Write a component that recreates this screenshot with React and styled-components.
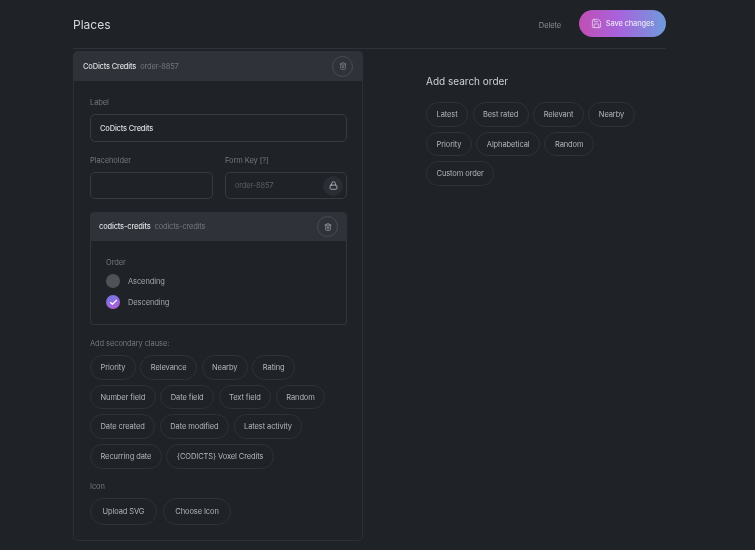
import React from 'react';
import styled, { createGlobalStyle } from 'styled-components';
import { Lock, Save, Trash2, Check } from 'lucide-react';

const GlobalStyle = createGlobalStyle`
  html, body {
    margin: 0;
    padding: 0;
    background: #1f2227;
    font-family: Inter, "Liberation Sans", sans-serif;
    overflow: hidden;
  }
`;

const Page = styled.div`
  width: 593px;
  height: 550px;
  margin-left: 73px;
  filter: blur(0.45px);
`;

const TopBar = styled.header`
  display: flex;
  align-items: center;
  height: 48px;
  border-bottom: 1px solid #2f3238;
  margin-bottom: 2px;
`;

const Title = styled.h1`
  flex: 1;
  margin: 0;
  font-size: 12px;
  font-weight: 400;
  color: #d8d9dc;
`;

const DeleteLink = styled.span`
  font-size: 7.5px;
  letter-spacing: -0.1px;
  color: #8b8d92;
  margin: 2px 18px 0 0;
`;

const SaveButton = styled.button`
  display: flex;
  align-items: center;
  justify-content: center;
  gap: 4px;
  width: 87px;
  height: 27px;
  margin-top: -1px;
  padding: 0;
  border: 0;
  border-radius: 14px;
  background: linear-gradient(90deg, #c04fb3 0%, #a862dc 45%, #6f9bdc 100%);
  color: #e9e2f4;
  font: 500 7.5px Inter, "Liberation Sans", sans-serif;
  letter-spacing: -0.15px;
`;

const Columns = styled.div`
  display: grid;
  grid-template-columns: 290px 240px;
  column-gap: 63px;
  align-items: start;
`;

const Card = styled.section`
  border: 1px solid #2d3036;
  border-top: 0;
  border-radius: 5px;
`;

const CardHead = styled.div`
  display: flex;
  align-items: center;
  gap: 4px;
  height: ${(p) => p.$height}px;
  padding: 0 ${(p) => p.$right}px 0 ${(p) => p.$left}px;
  margin: 0 -1px;
  background: #2f3239;
  border-radius: 5px 5px 0 0;
`;

const HeadName = styled.span`
  font-size: 7.5px;
  letter-spacing: -0.18px;
  font-weight: 500;
  color: #dedfe2;
`;

const HeadKey = styled.span`
  flex: 1;
  font-size: 7.5px;
  letter-spacing: -0.18px;
  color: #74777d;
`;

const RoundIcon = styled.span`
  display: flex;
  align-items: center;
  justify-content: center;
  width: 19px;
  height: 19px;
  border: 1px solid #4a4d54;
  border-radius: 50%;
  color: ${(p) => (p.$dim ? '#75777c' : '#a9abaf')};
`;

const CardBody = styled.div`
  padding: 16px 15px 15px 16px;
`;

const FieldLabel = styled.div`
  font-size: 7.5px;
  letter-spacing: -0.1px;
  line-height: 11px;
  color: #74777d;
  margin-bottom: ${(p) => p.$gap || 6}px;
`;

const Field = styled.div`
  display: flex;
  align-items: center;
  height: ${(p) => p.$height}px;
  box-sizing: border-box;
  padding: 0 3px 0 9px;
  border: 1px solid #373a41;
  border-radius: 5px;
  font-size: 7.5px;
  letter-spacing: -0.18px;
`;

const FieldValue = styled.span`
  flex: 1;
  font-weight: ${(p) => (p.$muted ? 400 : 500)};
  color: ${(p) => (p.$muted ? '#5c5f65' : '#dedfe2')};
`;

const LockBadge = styled.span`
  display: flex;
  align-items: center;
  justify-content: center;
  width: 20px;
  height: 20px;
  border-radius: 50%;
  background: #2a2d33;
  color: #c4c5c9;
`;

const FieldRow = styled.div`
  display: grid;
  grid-template-columns: 123px 122px;
  column-gap: 12px;
  margin-top: 13px;
`;

const InnerCard = styled.div`
  margin: 13px 0 13px;
  border: 1px solid #32353b;
  border-top: 0;
  border-radius: 4px;
`;

const InnerBody = styled.div`
  padding: 16px 15px 15px;
`;

const OptionRow = styled.div`
  display: flex;
  align-items: center;
  gap: 8px;
  height: 14px;
  margin-top: ${(p) => p.$top}px;
  font-size: 7.5px;
  letter-spacing: -0.1px;
  color: #a5a7ab;
`;

const Radio = styled.span`
  display: flex;
  align-items: center;
  justify-content: center;
  width: 14px;
  height: 14px;
  border-radius: 50%;
  background: ${(p) => (p.$checked ? 'linear-gradient(160deg, #6f78e8, #b65dd6)' : '#505258')};
  color: #fff;
`;

const ChipStack = styled.div`
  display: flex;
  flex-direction: column;
  gap: 5px;
`;

const ChipRow = styled.div`
  display: flex;
  gap: ${(p) => p.$gap || 4.5}px;
`;

const Chip = styled.span`
  display: flex;
  align-items: center;
  height: ${(p) => (p.$tall ? 27 : 24.7)}px;
  box-sizing: border-box;
  padding: 0 ${(p) => (p.$tall ? 11.5 : 9.5)}px;
  border: 1px solid #2f3238;
  border-radius: 14px;
  font-size: 7.5px;
  letter-spacing: -0.1px;
  color: #b5b6ba;
  white-space: nowrap;
`;

const IconLabel = styled(FieldLabel)`
  margin-top: 12px;
`;

const SideTitle = styled.h2`
  margin: 23px 0 14px;
  font-size: 10px;
  line-height: 14px;
  font-weight: 400;
  color: #d0d1d4;
`;

const orders = [['Latest', 'Best rated', 'Relevant', 'Nearby'], ['Priority', 'Alphabetical', 'Random'], ['Custom order']];
const clauses = [
  ['Priority', 'Relevance', 'Nearby', 'Rating'],
  ['Number field', 'Date field', 'Text field', 'Random'],
  ['Date created', 'Date modified', 'Latest activity'],
  ['Recurring date', '{CODICTS} Voxel Credits'],
];

function ChipRows({ rows }) {
  return (
    <ChipStack>
      {rows.map((row, index) => (
        <ChipRow key={index}>
          {row.map((name) => <Chip key={name}>{name}</Chip>)}
        </ChipRow>
      ))}
    </ChipStack>
  );
}

export default function App() {
  return (
    <Page>
      <GlobalStyle />
      <TopBar>
        <Title>Places</Title>
        <DeleteLink>Delete</DeleteLink>
        <SaveButton><Save size={11} strokeWidth={1.6} />Save changes</SaveButton>
      </TopBar>
      <Columns>
        <Card>
          <CardHead $height={30} $left={10} $right={10}>
            <HeadName>CoDicts Credits</HeadName>
            <HeadKey>order-8857</HeadKey>
            <RoundIcon $dim><Trash2 size={8} strokeWidth={2.6} /></RoundIcon>
          </CardHead>
          <CardBody>
            <FieldLabel>Label</FieldLabel>
            <Field $height={28}><FieldValue>CoDicts Credits</FieldValue></Field>
            <FieldRow>
              <div>
                <FieldLabel>Placeholder</FieldLabel>
                <Field $height={27} />
              </div>
              <div>
                <FieldLabel>Form Key [?]</FieldLabel>
                <Field $height={27}>
                  <FieldValue $muted>order-8857</FieldValue>
                  <LockBadge><Lock size={9} /></LockBadge>
                </Field>
              </div>
            </FieldRow>
            <InnerCard>
              <CardHead $height={29} $left={9} $right={9}>
                <HeadName>codicts-credits</HeadName>
                <HeadKey>codicts-credits</HeadKey>
                <RoundIcon><Trash2 size={8} strokeWidth={2} /></RoundIcon>
              </CardHead>
              <InnerBody>
                <FieldLabel $gap={0}>Order</FieldLabel>
                <OptionRow $top={6}><Radio />Ascending</OptionRow>
                <OptionRow $top={7}><Radio $checked><Check size={9} strokeWidth={3} /></Radio>Descending</OptionRow>
              </InnerBody>
            </InnerCard>
            <FieldLabel>Add secondary clause:</FieldLabel>
            <ChipRows rows={clauses} />
            <IconLabel>Icon</IconLabel>
            <ChipRow $gap={6}>
              <Chip $tall>Upload SVG</Chip>
              <Chip $tall>Choose Icon</Chip>
            </ChipRow>
          </CardBody>
        </Card>
        <div>
          <SideTitle>Add search order</SideTitle>
          <ChipRows rows={orders} />
        </div>
      </Columns>
    </Page>
  );
}
